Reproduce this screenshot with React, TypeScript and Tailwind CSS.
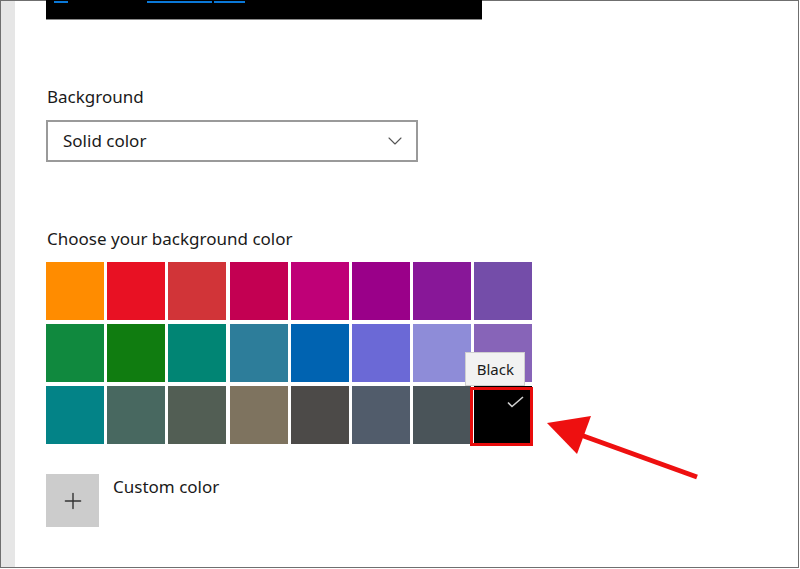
import { Plus, ChevronDown } from "lucide-react";

// Windows 10 accent palette, 3 rows x 8
const COLORS = [
  "#FF8C00", "#E81123", "#D13438", "#C30052", "#BF0077", "#9A0089", "#881798", "#744DA9",
  "#10893E", "#107C10", "#018574", "#2D7D9A", "#0063B1", "#6B69D6", "#8E8CD8", "#8764B8",
  "#038387", "#486860", "#525E54", "#7E735F", "#4C4A48", "#515C6B", "#4A5459", "#000000",
];

function Swatch({ color, selected }: { color: string; selected?: boolean }) {
  return (
    <div className="relative w-[58px] h-[58px]" style={{ backgroundColor: color }}>
      {selected && (
        <>
          <div className="absolute -left-[4px] top-[1px] -right-[1px] -bottom-[2px] border-[3.5px] border-[#e80c0c]" />
          <svg className="absolute left-[33px] top-[10px]" width="17" height="12" viewBox="0 0 17 12">
            <path d="M1 6.5 L5 10.5 L16 1" fill="none" stroke="#d0d0d0" strokeWidth="1.6" />
          </svg>
          <div className="absolute -left-[9px] -top-[34px] w-[60px] h-[34px] bg-[#f2f2f2] border border-[#cfcfcf] flex items-center justify-center text-[15px] text-[#1a1a1a]">
            Black
          </div>
        </>
      )}
    </div>
  );
}

export default function App() {
  return (
    <div className="relative w-[800px] h-[569px] bg-white overflow-hidden" style={{ fontFamily: '"Noto Sans", "Open Sans", sans-serif' }}>
      <div className="w-[799px] h-[568px] border border-[#6f6f6f] flex">
        {/* left nav strip */}
        <div className="w-[14px] bg-[#e6e6e6]" />

        {/* settings content */}
        <div className="pl-[31px] flex flex-col text-[#1a1a1a]">
          <div className="-mt-[1px] w-[436px] h-[20px] bg-black border-b border-[#8a8a8a] flex items-start">
            <div className="ml-[8px] mt-[1px] w-[14px] h-[2px] bg-[#0a78d7]" />
            <div className="ml-[79px] mt-[1px] w-[65px] h-[2px] bg-[#0a78d7]" />
            <div className="ml-[2px] mt-[1px] w-[31px] h-[2px] bg-[#0a78d7]" />
          </div>

          <div className="mt-[65px] text-[17px] leading-[24px] pl-[1px]">Background</div>

          <div className="mt-[11px] w-[372px] h-[42px] border-2 border-[#9a9a9a] flex items-center justify-between pl-[15px] pr-[9px]">
            <span className="text-[17px] leading-[24px]">Solid color</span>
            <ChevronDown className="w-[24px] h-[24px] text-[#555]" strokeWidth={1.1} />
          </div>

          <div className="mt-[65px] text-[17px] leading-[24px] pl-[1px]">Choose your background color</div>

          <div className="mt-[11px] grid grid-cols-[repeat(8,58px)] gap-x-[3.2px] gap-y-[4px]">
            {COLORS.map((c, i) => (
              <Swatch key={i} color={c} selected={i === 23} />
            ))}
          </div>

          <div className="mt-[30px] flex items-start gap-[14px]">
            <div className="w-[53px] h-[53px] bg-[#cccccc] flex items-center justify-center">
              <Plus className="w-[26px] h-[26px] text-[#333]" strokeWidth={1.3} />
            </div>
            <span className="text-[17px] leading-[24px] mt-[1px]">Custom color</span>
          </div>
        </div>
      </div>

      {/* red annotation arrow */}
      <svg className="absolute left-0 top-0 pointer-events-none" width="800" height="569">
        <line x1="697" y1="477" x2="578" y2="434" stroke="#ee1010" strokeWidth="5" />
        <polygon points="547,423 591,416 577,454" fill="#ee1010" />
      </svg>
    </div>
  );
}
